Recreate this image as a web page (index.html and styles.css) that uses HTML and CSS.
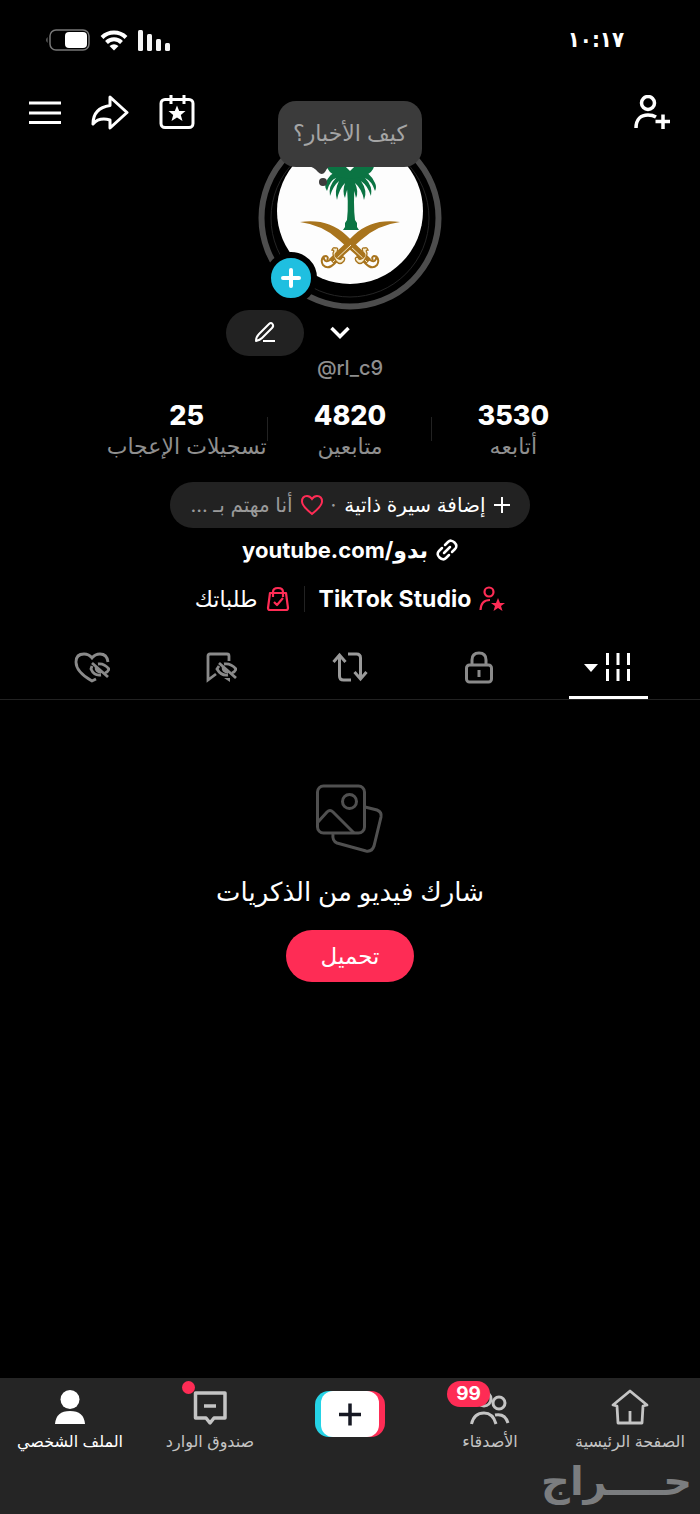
FILE: index.html
```html
<!DOCTYPE html>
<html lang="ar" dir="rtl">
<head>
  <meta charset="UTF-8" />
  <meta name="viewport" content="width=device-width, initial-scale=1" />
  <title>الملف الشخصي</title>
  <link rel="stylesheet" href="styles.css">
</head>
<body>
  <div class="status-bar">
    <span class="time">١٠:١٧</span>
    <div class="status-icons">
      <svg width="34" height="24" viewBox="0 0 34 24" fill="#f4f4f4">
        <rect x="1" y="2" width="5" height="21" rx="1.5"/>
        <rect x="10" y="6" width="5" height="17" rx="1.5"/>
        <rect x="19" y="11" width="5" height="12" rx="1.5"/>
        <rect x="28" y="15" width="5" height="8" rx="1.5"/>
      </svg>
      <svg width="28" height="24" viewBox="0 0 28 24" fill="none" stroke="#fff" stroke-width="4">
        <path d="M2 9.500A17 17 0 0 1 26 9.500"/>
        <path d="M6.500 14.500A10.500 10.500 0 0 1 21.500 14.500"/>
        <path d="M14 22.500L9.500 18Q14 14.500 18.500 18Z" fill="#fff" stroke="none"/>
      </svg>
      <svg width="46" height="24" viewBox="0 0 46 24" fill="none">
        <rect x="5" y="2" width="39" height="20" rx="6" stroke="#777" stroke-width="1.500"/>
        <rect x="20" y="4" width="22" height="16" rx="4" fill="#fff"/>
        <path d="M2.500 9Q0 12 2.500 15Z" fill="#777"/>
      </svg>
    </div>
  </div>

  <header class="top">
    <button class="icon-btn" aria-label="إضافة أصدقاء">
      <svg width="38" height="36" viewBox="0 0 38 36" fill="none" stroke="#fff" stroke-width="3.500">
        <circle cx="15" cy="8" r="6.500"/>
        <path d="M3 33C3 24 8 20 15 20C18 20 20.500 20.500 23 22"/>
        <path d="M22.500 26.500H37M30 19.500V34"/>
      </svg>
    </button>

    <div class="avatar">
      <svg class="avatar-img" viewBox="0 0 184 184">
        <circle cx="92" cy="92" r="88.500" fill="#000" stroke="#4d4d4d" stroke-width="6"/>
        <circle cx="92" cy="92" r="79" fill="none" stroke="#252525" stroke-width="1"/>
        <circle cx="92" cy="85" r="73" fill="#fdfdfd"/>
        <!-- palm -->
        <g fill="#0b7443">
          <path d="M88 54H97Q95 78 97 94L99 97V101L101 104H85L87 101V97L89 94Q91 76 88 54Z"/>
          <path d="M92 50Q76 38 67 58Q67 62 69 65Q72 54 78 52Q70 60 72 70Q75 60 81 55Q76 65 79 74Q81 63 87 57Q84 66 87 72Q89 62 92 57Q96 62 98 72Q101 66 97 57Q104 63 106 74Q110 65 103 55Q110 60 113 70Q115 60 107 52Q114 55 117 65Q119 61 117 57Q108 38 92 50Z"/>
          <path d="M92 53Q68 50 69 38Q80 32 92 45Q104 32 116 38Q117 50 92 53Z"/>
        </g>
        <!-- swords -->
        <g id="sword">
          <path d="M42 96Q70 92 88 109L113 133L108 138L81 114Q65 99 42 96Z" fill="#a8741d"/>
          <path d="M91 119L109 136" stroke="#f7edcf" stroke-width="1"/>
          <path d="M101 124L112 134Q116 137 118 133Q119 130 116 130Q113 131 115 134M99 129L108 138Q114 144 119 139Q122 134 118 130" fill="none" stroke="#a8741d" stroke-width="2"/>
          <path d="M107 122Q103 121 105 126Q109 129 105 132Q101 135 100 131Q96 131 98 135Q102 140 106 135Q109 131 109 127Q107 124 110 124Q109 121 107 122Z" fill="#f7edcf" stroke="#a8741d" stroke-width="1.300"/>
        </g>
        <use href="#sword" transform="translate(184 0) scale(-1 1)"/>
      </svg>
      <div class="bubble">كيف الأخبار؟
        <svg class="bubble-tail" width="24" height="22" viewBox="0 0 24 22" fill="#3b3b3b">
          <path d="M0 0H22Q18 3 17 6Q14 10 10 6Q6 1 0 0Z"/>
          <circle cx="15" cy="16" r="4"/>
        </svg>
      </div>
      <button class="add-story" aria-label="إضافة قصة">
        <svg width="22" height="22" viewBox="0 0 22 22" stroke="#fff" stroke-width="4" stroke-linecap="round"><path d="M3 11H19M11 3V19"/></svg>
      </button>
    </div>

    <div class="top-actions">
      <button class="icon-btn" aria-label="التقويم">
        <svg width="36" height="36" viewBox="0 0 36 36" fill="none" stroke="#fff" stroke-width="3">
          <rect x="2" y="4.500" width="32" height="28" rx="4"/>
          <path d="M12 0V9M25 0V9"/>
          <path d="M18 10.500L20.200 16H26.500L21.800 20L23.500 26L18 22.500L12.500 26L14.200 20L9.500 16H15.800Z" fill="#fff" stroke="none"/>
        </svg>
      </button>
      <button class="icon-btn" aria-label="مشاركة">
        <svg width="38" height="36" viewBox="0 0 38 36" fill="none" stroke="#fff" stroke-width="3" stroke-linejoin="round">
          <path d="M19 2L36 17.500L19 33V25Q8 22 2 29Q2 13 19 10.500Z"/>
        </svg>
      </button>
      <button class="icon-btn" aria-label="القائمة">
        <svg width="32" height="36" viewBox="0 0 32 36" stroke="#fff" stroke-width="3"><path d="M0 8H32M0 18H32M0 27.500H32"/></svg>
      </button>
    </div>
  </header>

  <main>
    <div class="name-row">
      <button class="icon-btn" aria-label="تبديل الحساب">
        <svg width="20" height="20" viewBox="0 0 20 20" fill="none" stroke="#fff" stroke-width="3.500"><path d="M1.500 5L10 13.500L18.500 5"/></svg>
      </button>
      <button class="edit-btn" aria-label="تعديل">
        <svg width="22" height="22" viewBox="0 0 22 22" fill="none" stroke="#fff" stroke-width="2" stroke-linejoin="round">
          <path d="M2 19Q2 15 5 12L15 2Q17 0 18.500 2Q20 4 18 6L8 16Q6 18 2 19ZM9 19H21"/>
        </svg>
      </button>
    </div>
    <p class="handle" dir="ltr">@rl_c9</p>

    <div class="stats">
      <a href="#"><b>3530</b><span>أتابعه</span></a>
      <a href="#"><b>4820</b><span>متابعين</span></a>
      <a href="#"><b>25</b><span>تسجيلات الإعجاب</span></a>
    </div>

    <button class="bio">
      <svg width="16" height="16" viewBox="0 0 16 16" stroke="#fff" stroke-width="2"><path d="M0 8H16M8 0V16"/></svg>
      <span>إضافة سيرة ذاتية</span>
      <span class="muted">·</span>
      <svg width="22" height="22" viewBox="0 0 22 22" fill="none" stroke="#fe2c55" stroke-width="2"><path d="M11 20Q1 12 1 7.500Q1 2 6 2Q9 2 11 5Q13 2 16 2Q21 2 21 7.500Q21 12 11 20Z"/></svg>
      <span class="muted">أنا مهتم بـ ...</span>
    </button>

    <a class="site-link" href="#">
      <svg width="22" height="22" viewBox="0 0 22 22" fill="none" stroke="#fff" stroke-width="2.500" stroke-linecap="round">
        <path d="M9 6L12 3Q15 0 18.500 3.500Q22 7 19 10L16 13M13 16L10 19Q7 22 3.500 18.500Q0 15 3 12L6 9M8 14L14 8"/>
      </svg>
      <span dir="ltr">youtube.com/بدو</span>
    </a>

    <div class="tools">
      <a href="#">
        <svg width="26" height="26" viewBox="0 0 26 26" fill="none" stroke="#fe2c55" stroke-width="2.200">
          <circle cx="10" cy="6" r="4.500"/>
          <path d="M1.500 24Q2 14 11 14"/>
          <path d="M19 12L21 17H26L22 20L23.500 25L19 22L14.500 25L16 20L12 17H17Z" fill="#fe2c55" stroke="none"/>
        </svg>
        <b>TikTok Studio</b>
      </a>
      <a href="#">
        <svg width="24" height="26" viewBox="0 0 24 26" fill="none" stroke="#fe2c55" stroke-width="2.200" stroke-linejoin="round">
          <path d="M4 7H20L22 22Q22 24 20 24H4Q2 24 2 22ZM7 11V6Q7 2 12 2Q17 2 17 6V11M8 16L11 19L17 12"/>
        </svg>
        <span>طلباتك</span>
      </a>
    </div>

    <nav class="tabs">
      <button class="tab active" aria-label="المنشورات">
        <svg width="28" height="32" viewBox="0 0 28 32" stroke="#fff" stroke-width="3"><path d="M3.500 1V13M14 1V13M24.500 1V13M3.500 17V29M14 17V29M24.500 17V29"/></svg>
        <svg width="14" height="10" viewBox="0 0 14 10" fill="#fff"><path d="M0 1H14L7 9Z"/></svg>
      </button>
      <button class="tab" aria-label="خاص">
        <svg width="30" height="34" viewBox="0 0 30 34" fill="none" stroke="#8a8a8a" stroke-width="3">
          <rect x="2.500" y="14" width="25" height="17" rx="3"/><path d="M8 14V9Q8 2 15 2Q22 2 22 9V14M15 19V26"/>
        </svg>
      </button>
      <button class="tab" aria-label="إعادة النشر">
        <svg width="36" height="32" viewBox="0 0 36 32" fill="none" stroke="#9a9a9a" stroke-width="3">
          <path d="M1.500 10L7.500 3L13.500 10M7.500 4V24Q7.500 28 11.500 28H19M16 2H24.500Q28.500 2 28.500 6V26M22.500 20L28.500 27L34.500 20"/>
        </svg>
      </button>
      <button class="tab" aria-label="المحفوظات">
        <svg width="32" height="32" viewBox="0 0 32 32" fill="none" stroke="#8a8a8a" stroke-width="2.800">
          <path d="M11 22L3 28V4Q3 2 5 2H22Q24 2 24 4V9"/>
          <path d="M14 11L31 26M19 12Q26 11 31 17Q30 20 27 21M14 14L12 17Q16 24 23 23M18 15Q18 20 23 20"/>
          <path d="M19 26H25V30Z" fill="#8a8a8a" stroke="none"/>
        </svg>
      </button>
      <button class="tab" aria-label="الإعجابات">
        <svg width="36" height="32" viewBox="0 0 36 32" fill="none" stroke="#8a8a8a" stroke-width="2.800">
          <path d="M22 27L18 29Q2 20 2 10Q2 2 10 2Q15 2 18 6Q21 2 26 2Q33 2 34 10"/>
          <path d="M18 11L34 25M24 12Q30 11 35 17Q34 20 31 21M18 14L17 17Q20 24 27 23M22 15Q22 20 27 20"/>
        </svg>
      </button>
    </nav>

    <section class="empty">
      <svg width="68" height="70" viewBox="1 0 68 70" fill="none" stroke="#505050" stroke-width="3">
        <rect x="2.500" y="2" width="47" height="47" rx="6"/>
        <circle cx="34.500" cy="17.500" r="7"/>
        <path d="M3 38L12 28Q15 25 18 28L39 49"/>
        <path d="M50 23L62 26Q67 28 66 33L59 62Q57 68 51 67L22 59Q17 57 18 50"/>
      </svg>
      <h1>شارك فيديو من الذكريات</h1>
      <button class="upload-btn">تحميل</button>
    </section>
  </main>

  <footer>
    <nav class="bottom-nav">
      <a href="#">
        <svg width="40" height="36" viewBox="0 0 40 36" fill="none" stroke="#c4c4c4" stroke-width="2.800" stroke-linejoin="round">
          <path d="M20 2L37 16L33 17L32 34H8L7 17L3 16ZM20 34V22"/>
        </svg>
        <span>الصفحة الرئيسية</span>
      </a>
      <a href="#">
        <span class="icon-wrap">
          <svg width="40" height="36" viewBox="0 0 40 36" fill="none" stroke="#c4c4c4" stroke-width="3">
            <circle cx="14" cy="10" r="7"/><circle cx="29" cy="14" r="6"/>
            <path d="M1.500 35Q4 24 14 24Q23 24 26 35M25 26Q35 24 38 34"/>
          </svg>
          <b class="badge">99</b>
        </span>
        <span>الأصدقاء</span>
      </a>
      <a class="create" href="#" aria-label="إنشاء">
        <span class="create-icon"><svg width="58" height="46" viewBox="0 0 58 46" stroke="#161823" stroke-width="3.500"><rect width="58" height="46" rx="12" fill="#fff" stroke="none"/><path d="M18 23.500H40M29 12.500V34.500"/></svg></span>
      </a>
      <a href="#">
        <span class="icon-wrap">
          <svg width="40" height="36" viewBox="0 0 40 36" fill="none" stroke="#c4c4c4" stroke-width="3.500" stroke-linejoin="round">
            <path d="M5.500 4H35V29H24L20 34L16 29H5.500ZM14 17H26"/>
          </svg>
          <i class="dot"></i>
        </span>
        <span>صندوق الوارد</span>
      </a>
      <a class="current" href="#">
        <svg width="40" height="36" viewBox="0 0 40 36" fill="#fff">
          <circle cx="20" cy="10.500" r="9.500"/><path d="M5 35Q6 22 20 22Q34 22 35 35Z"/>
        </svg>
        <span>الملف الشخصي</span>
      </a>
    </nav>
    <div class="watermark">حــــراج</div>
  </footer>
</body>
</html>
```
FILE: styles.css
```css
* {
  box-sizing: border-box;
}
body {
  margin: 0;
  min-height: 100vh;
  display: flex;
  flex-direction: column;
  background: #000;
  color: #fff;
  font-family: Inter, "DejaVu Sans", sans-serif;
  font-size: 20px;
  line-height: 24px;
}
svg {
  display: block;
  flex: none;
}
a {
  color: inherit;
  text-decoration: none;
}
button {
  padding: 0;
  border: none;
  background: none;
  color: inherit;
  font: inherit;
  cursor: pointer;
}

/* Status bar */
.status-bar {
  display: flex;
  justify-content: space-between;
  align-items: center;
  height: 80px;
  padding: 0 76px 0 45px;
}
.time {
  font-family: "DejaVu Sans Condensed", "DejaVu Sans", sans-serif;
  font-size: 22px;
  font-weight: 700;
}
.status-icons {
  display: flex;
  gap: 9px;
}

/* Header */
.top {
  display: grid;
  grid-template-columns: 1fr 184px 1fr;
  align-items: start;
  padding: 15px 29px 0;
}
.top > .icon-btn {
  justify-self: start;
}
.top-actions {
  display: flex;
  justify-content: flex-end;
  gap: 30px;
}
.avatar {
  position: relative;
  padding-top: 31px;
}
.avatar-img {
  width: 184px;
  height: 184px;
}
.bubble {
  position: absolute;
  top: 6px;
  left: 20px;
  width: 144px;
  height: 66px;
  border-radius: 18px;
  background: #3b3b3b;
  color: #a5a5a5;
  font-size: 22px;
  line-height: 64px;
  text-align: center;
  white-space: nowrap;
}
.bubble-tail {
  position: absolute;
  top: 65px;
  left: 30px;
}
.add-story {
  position: absolute;
  left: 7px;
  bottom: 6px;
  width: 52px;
  height: 52px;
  display: grid;
  place-items: center;
  border: 6px solid #000;
  border-radius: 50%;
  background: #1fbfe0;
}

/* Profile */
.name-row {
  display: flex;
  justify-content: center;
  align-items: center;
  gap: 26px;
  height: 46px;
  padding-right: 124px;
}
.edit-btn {
  display: grid;
  place-items: center;
  width: 78px;
  height: 46px;
  border-radius: 23px;
  background: #222;
}
.handle {
  margin: 0;
  color: #8f8f8f;
  font-weight: 500;
  text-align: center;
}
.stats {
  display: grid;
  grid-template-columns: repeat(3, 1fr);
  max-width: 490px;
  margin: 20px auto 0;
}
.stats a {
  display: flex;
  flex-direction: column;
  align-items: center;
  gap: 2px;
  white-space: nowrap;
}
.stats a + a {
  background: linear-gradient(#222, #222) right center / 1px 24px no-repeat;
}
.stats b {
  font-size: 27px;
  line-height: 32px;
  font-weight: 800;
}
.stats span {
  color: #8f8f8f;
  font-size: 22px;
}
.bio {
  display: flex;
  justify-content: center;
  align-items: center;
  gap: 8px;
  width: 360px;
  height: 46px;
  margin: 24px auto 0;
  border-radius: 23px;
  background: #222;
  white-space: nowrap;
}
.muted {
  color: #9a9a9a;
}
.site-link {
  display: flex;
  justify-content: center;
  align-items: center;
  gap: 8px;
  margin-top: 10px;
  font-size: 22px;
  font-weight: 700;
}
.tools {
  display: flex;
  justify-content: center;
  margin-top: 24px;
  font-size: 22px;
}
.tools a {
  display: flex;
  align-items: center;
  gap: 8px;
}
.tools b {
  font-size: 23px;
}
.tools a + a {
  margin-right: 14px;
  padding-right: 14px;
  border-right: 1px solid #222;
}

/* Tabs */
.tabs {
  display: grid;
  grid-template-columns: repeat(5, 1fr);
  height: 64px;
  margin-top: 24px;
  padding: 0 27px;
  border-bottom: 1px solid #222;
}
.tab {
  display: flex;
  justify-content: center;
  align-items: center;
  gap: 6px;
}
.tab.active {
  justify-self: center;
  width: 79px;
  border-top: 3px solid transparent;
  border-bottom: 3px solid #fff;
}

/* Empty state */
.empty {
  display: flex;
  flex-direction: column;
  align-items: center;
  padding: 84px 16px 40px;
}
.empty h1 {
  margin: 20px 0;
  font-size: 26px;
  line-height: 36px;
  font-weight: 500;
}
.upload-btn {
  width: 128px;
  height: 52px;
  border-radius: 26px;
  background: #fe2c55;
  font-size: 23px;
}

/* Bottom bar */
footer {
  display: flex;
  flex-direction: column;
  height: 136px;
  margin-top: auto;
  background: #252525;
}
.bottom-nav {
  display: grid;
  grid-template-columns: repeat(5, 1fr);
  padding-top: 11px;
}
.bottom-nav a {
  display: flex;
  flex-direction: column;
  align-items: center;
  gap: 4px;
  color: #c4c4c4;
  font-size: 16px;
  white-space: nowrap;
}
.bottom-nav .current {
  color: #fff;
}
.icon-wrap {
  position: relative;
}
.badge {
  position: absolute;
  top: -8px;
  right: 20px;
  width: 43px;
  height: 26px;
  border-radius: 13px;
  background: #fe2c55;
  color: #fff;
  font-size: 19px;
  line-height: 26px;
  text-align: center;
}
.dot {
  position: absolute;
  top: -8px;
  left: -8px;
  width: 13px;
  height: 13px;
  border-radius: 50%;
  background: #fe2c55;
}
.create-icon {
  width: 70px;
  margin-top: 2px;
  padding: 0 6px;
  border-radius: 14px;
  background: linear-gradient(90deg, #25d3e6 50%, #fe2c55 50%);
}
.watermark {
  padding: 8px 8px 0;
  color: #7b7d7f;
  font-size: 40px;
  line-height: 40px;
  font-weight: 700;
}
```
